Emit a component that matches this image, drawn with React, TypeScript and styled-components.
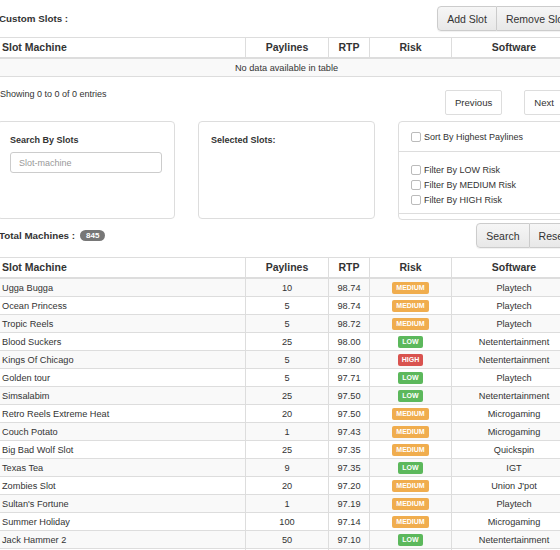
import React from 'react'
import styled, { createGlobalStyle, css } from 'styled-components'

const GlobalStyle = createGlobalStyle`
  html, body {
    margin: 0;
    padding: 0;
    background: #fff;
    overflow: hidden;
  }
  body {
    font-family: "Liberation Sans", Arial, Helvetica, sans-serif;
    color: #333;
    font-size: 9px;
  }
`

const Page = styled.div`
  width: 580px;
  margin-left: -4px;
`

const Toolbar = styled.div<{ $top: number }>`
  display: flex;
  align-items: center;
  justify-content: space-between;
  margin-top: ${({ $top }) => $top}px;
`

const Title = styled.div`
  font-size: 9.8px;
  font-weight: bold;
  padding-left: 3px;
  display: flex;
  align-items: center;
  gap: 5px;
`

const Badge = styled.span`
  display: inline-block;
  background: #777;
  color: #fff;
  font-size: 8px;
  font-weight: bold;
  line-height: 11px;
  padding: 0 6px;
  border-radius: 6px;
`

const BtnGroup = styled.div`
  display: flex;
`

const Button = styled.button<{ $first?: boolean; $last?: boolean; $solo?: boolean }>`
  height: 25px;
  padding: 0 9px;
  font-family: inherit;
  font-size: 10.5px;
  color: #333;
  background: linear-gradient(to bottom, #f6f6f6, #e8e8e8);
  border: 1px solid #ccc;
  box-shadow: 0 1px 1px rgba(0, 0, 0, 0.06);
  border-radius: 0;
  ${({ $first }) => $first && css`border-radius: 4px 0 0 4px;`}
  ${({ $last }) => $last && css`border-left: none; border-radius: 0 4px 4px 0;`}
  ${({ $solo }) =>
    $solo &&
    css`
      border-radius: 2px;
      background: #fff;
      font-size: 9.6px;
      box-shadow: none;
      border-color: #ddd;
    `}
`

const Table = styled.table<{ $top: number }>`
  width: 580px;
  table-layout: fixed;
  border-collapse: collapse;
  margin-top: ${({ $top }) => $top}px;
  border: 1px solid #ddd;
`

const Th = styled.th<{ $left?: boolean }>`
  font-size: 10.5px;
  font-weight: bold;
  line-height: 13px;
  padding: 3px 5px;
  text-align: ${({ $left }) => ($left ? 'left' : 'center')};
  border: 1px solid #ddd;
  border-bottom: 2px solid #ddd;
  white-space: nowrap;
  overflow: hidden;
`

const Tr = styled.tr<{ $striped?: boolean }>`
  background: ${({ $striped }) => ($striped ? '#f9f9f9' : '#fff')};
`

const Td = styled.td<{ $left?: boolean }>`
  font-size: 9.2px;
  line-height: 12px;
  padding: 3px 5px 2px;
  text-align: ${({ $left }) => ($left ? 'left' : 'center')};
  border: 1px solid #ddd;
  white-space: nowrap;
  overflow: hidden;
`

const EmptyRow = styled(Tr)`
  border-bottom: 1px solid #aaa;
`

const riskColors: Record<string, string> = {
  LOW: '#5cb85c',
  MEDIUM: '#f0ad4e',
  HIGH: '#d9534f',
}

const Label = styled.span<{ $risk: string }>`
  display: inline-block;
  vertical-align: top;
  background: ${({ $risk }) => riskColors[$risk]};
  color: #fff;
  font-size: 7px;
  font-weight: bold;
  line-height: 8px;
  padding: 2px 4px;
  border-radius: 2px;
`

const Footer = styled.div`
  display: flex;
  justify-content: space-between;
  align-items: flex-start;
  margin-top: 11px;
`

const Info = styled.div`
  font-size: 9px;
  padding-left: 4px;
  line-height: 12px;
`

const Pager = styled.div`
  display: flex;
  gap: 22px;
  margin-top: 2px;
  margin-right: 12px;
`

const Panels = styled.div`
  display: flex;
  align-items: flex-start;
  gap: 23px;
  margin-top: 6px;
  padding-left: 1px;
`

const Panel = styled.div<{ $tall?: boolean }>`
  flex: 0 0 177px;
  box-sizing: border-box;
  border: 1px solid #ddd;
  border-radius: 4px;
  min-height: ${({ $tall }) => ($tall ? 98 : 0)}px;
  padding: ${({ $tall }) => ($tall ? '12px 12px' : '0')};
`

const PanelTitle = styled.div`
  font-size: 9px;
  font-weight: bold;
  line-height: 12px;
`

const Input = styled.input`
  display: block;
  box-sizing: border-box;
  width: 152px;
  height: 21px;
  margin-top: 6px;
  padding: 0 8px;
  border: 1px solid #ccc;
  border-radius: 3px;
  font-family: inherit;
  font-size: 9px;
  color: #555;
  &::placeholder {
    color: #999;
  }
`

const PanelHead = styled.div`
  height: 29px;
  display: flex;
  align-items: center;
  padding-left: 12px;
  border-bottom: 1px solid #ddd;
`

const CheckList = styled.div`
  padding: 10px 0 6px 12px;
  border-bottom: 1px solid #ddd;
  margin-bottom: 5px;
`

const CheckRow = styled.label`
  display: flex;
  align-items: center;
  gap: 3px;
  height: 15px;
  font-size: 9px;
  white-space: nowrap;
`

const Box = styled.span`
  display: inline-block;
  width: 8px;
  height: 8px;
  border: 1px solid #bbb;
  border-radius: 2px;
  background: #fff;
`

type Slot = [string, number, string, string, string]

const slots: Slot[] = [
  ['Ugga Bugga', 10, '98.74', 'MEDIUM', 'Playtech'],
  ['Ocean Princess', 5, '98.74', 'MEDIUM', 'Playtech'],
  ['Tropic Reels', 5, '98.72', 'MEDIUM', 'Playtech'],
  ['Blood Suckers', 25, '98.00', 'LOW', 'Netentertainment'],
  ['Kings Of Chicago', 5, '97.80', 'HIGH', 'Netentertainment'],
  ['Golden tour', 5, '97.71', 'LOW', 'Playtech'],
  ['Simsalabim', 25, '97.50', 'LOW', 'Netentertainment'],
  ['Retro Reels Extreme Heat', 20, '97.50', 'MEDIUM', 'Microgaming'],
  ['Couch Potato', 1, '97.43', 'MEDIUM', 'Microgaming'],
  ['Big Bad Wolf Slot', 25, '97.35', 'MEDIUM', 'Quickspin'],
  ['Texas Tea', 9, '97.35', 'LOW', 'IGT'],
  ['Zombies Slot', 20, '97.20', 'MEDIUM', "Union J'pot"],
  ["Sultan's Fortune", 1, '97.19', 'MEDIUM', 'Playtech'],
  ['Summer Holiday', 100, '97.14', 'MEDIUM', 'Microgaming'],
  ['Jack Hammer 2', 50, '97.10', 'LOW', 'Netentertainment'],
  ['Mega Joker', 5, '97.00', 'HIGH', 'Netentertainment'],
]

const Cols = () => (
  <colgroup>
    <col style={{ width: 249 }} />
    <col style={{ width: 83 }} />
    <col style={{ width: 41 }} />
    <col style={{ width: 82 }} />
    <col style={{ width: 125 }} />
  </colgroup>
)

const Head = () => (
  <thead>
    <tr>
      <Th $left>Slot Machine</Th>
      <Th>Paylines</Th>
      <Th>RTP</Th>
      <Th>Risk</Th>
      <Th>Software</Th>
    </tr>
  </thead>
)

const Check = ({ text }: { text: string }) => (
  <CheckRow>
    <Box />
    {text}
  </CheckRow>
)

export default function App() {
  return (
    <>
      <GlobalStyle />
      <Page>
        <Toolbar $top={6}>
          <Title>Custom Slots :</Title>
          <BtnGroup>
            <Button $first>Add Slot</Button>
            <Button $last>Remove Slot</Button>
          </BtnGroup>
        </Toolbar>

        <Table $top={6}>
          <Cols />
          <Head />
          <tbody>
            <EmptyRow $striped>
              <Td colSpan={5}>No data available in table</Td>
            </EmptyRow>
          </tbody>
        </Table>

        <Footer>
          <Info>Showing 0 to 0 of 0 entries</Info>
          <Pager>
            <Button $solo>Previous</Button>
            <Button $solo>Next</Button>
          </Pager>
        </Footer>

        <Panels>
          <Panel $tall>
            <PanelTitle>Search By Slots</PanelTitle>
            <Input placeholder="Slot-machine" />
          </Panel>
          <Panel $tall>
            <PanelTitle>Selected Slots:</PanelTitle>
          </Panel>
          <Panel>
            <PanelHead>
              <Check text="Sort By Highest Paylines" />
            </PanelHead>
            <CheckList>
              <Check text="Filter By LOW Risk" />
              <Check text="Filter By MEDIUM Risk" />
              <Check text="Filter By HIGH Risk" />
            </CheckList>
          </Panel>
        </Panels>

        <Toolbar $top={3}>
          <Title>
            Total Machines : <Badge>845</Badge>
          </Title>
          <BtnGroup>
            <Button $first>Search</Button>
            <Button $last>Reset</Button>
          </BtnGroup>
        </Toolbar>

        <Table $top={9}>
          <Cols />
          <Head />
          <tbody>
            {slots.map(([name, lines, rtp, risk, soft], i) => (
              <Tr key={name} $striped={i % 2 === 0}>
                <Td $left>{name}</Td>
                <Td>{lines}</Td>
                <Td>{rtp}</Td>
                <Td>
                  <Label $risk={risk}>{risk}</Label>
                </Td>
                <Td>{soft}</Td>
              </Tr>
            ))}
          </tbody>
        </Table>
      </Page>
    </>
  )
}
